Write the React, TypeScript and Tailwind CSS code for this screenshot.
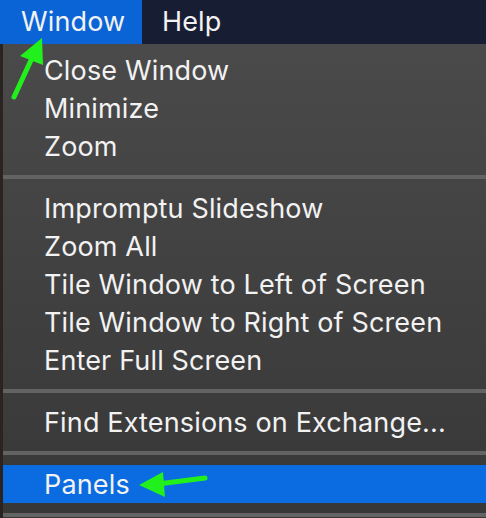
import React from 'react'

const GROUPS = [
  ['Close Window', 'Minimize', 'Zoom'],
  ['Impromptu Slideshow', 'Zoom All', 'Tile Window to Left of Screen', 'Tile Window to Right of Screen', 'Enter Full Screen'],
  ['Find Extensions on Exchange...'],
]

function Separator() {
  return <div className="my-[10px] h-1 bg-[#636364]" />
}

function Row({ label, active }: { label: string; active?: boolean }) {
  return (
    <div className={`flex h-[38px] items-center pl-[41px] ${active ? 'bg-[#0b6be0]' : ''}`}>
      <span className="leading-none">{label}</span>
    </div>
  )
}

export default function App() {
  return (
    <div
      className="relative h-[518px] w-[486px] overflow-hidden bg-[#3d3d3e] text-[27px] tracking-[0.15px] text-[#f2f2f2]"
      style={{ fontFamily: 'Inter, "Noto Sans", sans-serif' }}
    >
      <div className="flex h-[44px] items-center bg-[#171e33]">
        <div className="flex h-full w-[142px] items-center bg-[#0a64d6] pl-[21px]">Window</div>
        <div className="pl-[20px]">Help</div>
      </div>

      <div className="flex">
        <div className="w-[3px] bg-[#2a2420]" />
        <div className="flex-1 bg-gradient-to-b from-[#4a4a4b] to-[#373738] pt-[7px]">
          {GROUPS.map((group, i) => (
            <div key={i}>
              {group.map((label) => (
                <Row key={label} label={label} />
              ))}
              <Separator />
            </div>
          ))}
          <Row label="Panels" active />
          <Separator />
        </div>
      </div>

      <svg className="pointer-events-none absolute left-0 top-0" width="486" height="518">
        <line x1="14" y1="97" x2="32" y2="58" stroke="#22f01c" strokeWidth="5" strokeLinecap="round" />
        <polygon points="42,38 20,56 43,65" fill="#22f01c" />
        <line x1="205" y1="478" x2="158" y2="484" stroke="#22f01c" strokeWidth="5" strokeLinecap="round" />
        <polygon points="139,485 163,472 165,497" fill="#22f01c" />
      </svg>
    </div>
  )
}
